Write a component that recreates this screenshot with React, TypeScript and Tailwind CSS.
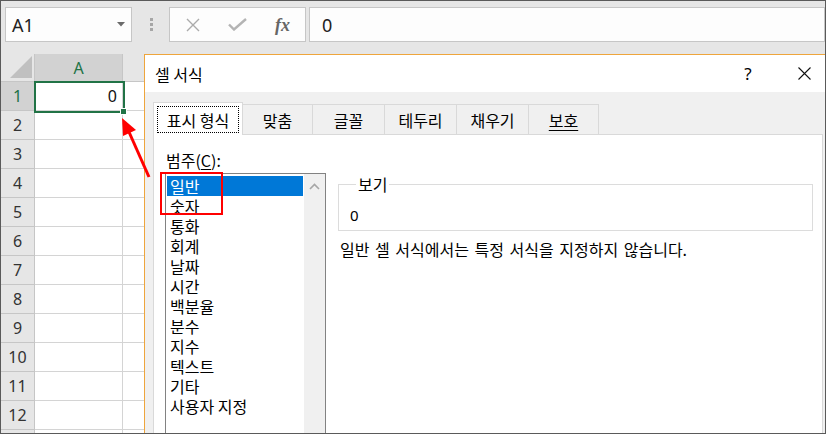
const rowNumbers = [1, 2, 3, 4, 5, 6, 7, 8, 9, 10, 11, 12, 13];

const categories = ['일반', '숫자', '통화', '회계', '날짜', '시간', '백분율', '분수', '지수', '텍스트', '기타', '사용자 지정'];

const tabs = [
  { label: '맞춤', width: 'w-[70px]', underline: false },
  { label: '글꼴', width: 'w-[72px]', underline: false },
  { label: '테두리', width: 'w-[72px]', underline: false },
  { label: '채우기', width: 'w-[72px]', underline: false },
  { label: '보호', width: 'w-[70px]', underline: true },
];

function FormulaBar() {
  return (
    <div className="h-[53px] bg-[#e6e6e6] flex items-start pt-[6px] pl-[4px]">
      {/* name box */}
      <div className="w-[127px] h-[35px] bg-[#fdfdfd] border border-[#c6c6c6] flex items-center pl-[6px] pr-[6px]">
        <span className="font-['Noto_Sans',sans-serif] text-[18px] leading-[22px] text-[#222]">A1</span>
        <svg className="ml-auto" width="8" height="5" viewBox="0 0 8 5">
          <polygon points="0,0 8,0 4,4.5" fill="#6b6b6b" />
        </svg>
      </div>

      {/* grip */}
      <div className="ml-[18px] mt-[11px] flex flex-col gap-[2px]">
        <div className="w-[3px] h-[3px] bg-[#a6a6a6]" />
        <div className="w-[3px] h-[3px] bg-[#a6a6a6]" />
        <div className="w-[3px] h-[3px] bg-[#a6a6a6]" />
      </div>

      {/* cancel / enter / fx */}
      <div className="ml-[16px] w-[137px] h-[35px] bg-[#fdfdfd] border border-[#c6c6c6] flex items-center">
        <div className="w-[45px] flex justify-center">
          <svg width="14" height="14" viewBox="0 0 14 14">
            <path d="M1 1 L13 13 M13 1 L1 13" stroke="#ababab" strokeWidth="1.4" />
          </svg>
        </div>
        <div className="w-[45px] flex justify-center">
          <svg width="19" height="13" viewBox="0 0 19 13">
            <path d="M1 6.5 L6 11.5 L18 1" stroke="#b4b4b4" strokeWidth="2.4" fill="none" />
          </svg>
        </div>
        <div className="w-[45px] flex justify-center">
          <span className="font-['Liberation_Serif',serif] italic font-bold text-[18px] leading-[22px] text-[#666]">fx</span>
        </div>
      </div>

      {/* formula input */}
      <div className="ml-[3px] flex-1 h-[35px] bg-[#fdfdfd] border border-[#c6c6c6] flex items-center pl-[12px]">
        <span className="font-['Noto_Sans',sans-serif] text-[18px] leading-[22px] text-[#222]">0</span>
      </div>
    </div>
  );
}

function SheetGrid() {
  return (
    <div className="w-[143px] overflow-hidden flex flex-col font-['Noto_Sans',sans-serif]">
      {/* column headers */}
      <div className="h-[28px] flex shrink-0">
        <div className="w-[34px] h-full bg-[#e6e6e6] border-r border-b border-[#c6c6c6] relative">
          <svg className="absolute left-[9px] top-[2px]" width="22" height="22" viewBox="0 0 22 22">
            <polygon points="0,22 22,0 22,22" fill="#c0c0c0" />
          </svg>
        </div>
        <div className="w-[88px] h-full bg-[#d2d2d2] border-r border-b border-[#c6c6c6] flex items-center justify-center text-[16px] text-[#217346]">
          A
        </div>
        <div className="w-[21px] h-full bg-[#e6e6e6] border-b border-[#c6c6c6]" />
      </div>

      {rowNumbers.map((n) => (
        <div key={n} className="h-[29px] flex shrink-0">
          <div
            className={
              n === 1
                ? 'w-[34px] h-full bg-[#d2d2d2] border-r border-b border-[#c6c6c6] flex items-center justify-center text-[16px] text-[#217346]'
                : 'w-[34px] h-full bg-[#e6e6e6] border-r border-b border-[#c6c6c6] flex items-center justify-center text-[16px] text-[#333]'
            }
          >
            {n < 13 ? n : ''}
          </div>
          <div className="w-[88px] h-full bg-white border-r border-b border-[#d4d4d4] flex items-center justify-end pr-[5px] text-[16px] text-[#111]">
            {n === 1 ? '0' : ''}
          </div>
          <div className="w-[21px] h-full bg-white border-b border-[#d4d4d4]" />
        </div>
      ))}
    </div>
  );
}

function FormatDialog() {
  return (
    <div className="flex-1 flex flex-col border-l border-t border-[#eea53c] font-['Noto_Sans_CJK_KR','Noto_Sans',sans-serif] text-[16px] text-black">
      {/* title bar */}
      <div className="h-[37px] bg-white flex items-center pl-[10px] shrink-0">
        <span className="leading-[20px]">셀 서식</span>
        <span className="ml-auto w-[30px] text-center leading-[20px] text-[17px] font-['Noto_Sans',sans-serif]">?</span>
        <div className="ml-[20px] w-[42px] flex justify-center">
          <svg width="13" height="13" viewBox="0 0 13 13">
            <path d="M0.5 0.5 L12.5 12.5 M12.5 0.5 L0.5 12.5" stroke="#111" strokeWidth="1.1" />
          </svg>
        </div>
      </div>

      {/* body */}
      <div className="flex-1 bg-[#f0f0f0] pt-[10px] pl-[8px] flex flex-col">
        {/* tabs */}
        <div className="h-[32px] flex items-end shrink-0">
          <div className="relative z-10 -mb-px w-[90px] h-[33px] bg-white border border-b-0 border-[#d9d9d9] p-[3px]">
            <div className="w-full h-[27px] border border-dotted border-black flex items-center justify-center leading-[20px]">
              표시 형식
            </div>
          </div>
          {tabs.map((t) => (
            <div
              key={t.label}
              className={`${t.width} h-[30px] border-t border-r border-[#d9d9d9] flex items-center justify-center leading-[20px]`}
            >
              <span className={t.underline ? 'underline underline-offset-[3px]' : ''}>{t.label}</span>
            </div>
          ))}
        </div>

        {/* tab page */}
        <div className="w-[670px] flex-1 bg-white border border-[#d9d9d9] pt-[15px] pl-[11px]">
          <div className="leading-[20px] pl-[1px]">
            범주(<span className="underline underline-offset-[2px]">C</span>):
          </div>

          <div className="mt-[3px] flex items-start">
            {/* category list */}
            <div className="w-[161px] h-[270px] border border-[#828282] flex">
              <div className="w-[138px] p-[1px] pt-[2px]">
                {categories.map((c, i) => (
                  <div
                    key={c}
                    className={
                      i === 0
                        ? 'h-[20px] leading-[20px] pl-[3px] bg-[#0078d7] text-white'
                        : 'h-[20px] leading-[20px] pl-[3px]'
                    }
                  >
                    {c}
                  </div>
                ))}
              </div>
              <div className="w-[21px] bg-[#f0f0f0]">
                <div className="h-[24px] flex items-center justify-center">
                  <svg width="11" height="7" viewBox="0 0 11 7">
                    <path d="M1 6 L5.5 1.5 L10 6" stroke="#a6a6a6" strokeWidth="1.6" fill="none" />
                  </svg>
                </div>
              </div>
            </div>

            {/* sample + description */}
            <div className="ml-[12px] mt-[1px] flex flex-col">
              <fieldset className="w-[475px] border border-[#dcdcdc] pl-[11px] pt-[11px] pb-[5px]">
                <legend className="ml-[6px] px-[2px] leading-[20px]">보기</legend>
                <div className="leading-[20px] text-[15px] font-['Noto_Sans',sans-serif]">0</div>
              </fieldset>
              <div className="mt-[8px] ml-[2px] leading-[20px] [word-spacing:2px]">
                일반 셀 서식에서는 특정 서식을 지정하지 않습니다.
              </div>
            </div>
          </div>
        </div>
      </div>
    </div>
  );
}

export default function App() {
  return (
    <div className="relative w-[826px] h-[434px] overflow-hidden border border-[#5a5a5a] bg-white flex flex-col">
      <FormulaBar />
      <div className="flex-1 flex overflow-hidden">
        <SheetGrid />
        <FormatDialog />
      </div>

      {/* active cell selection */}
      <div className="absolute left-[33px] top-[80px] w-[91px] h-[32px] border-2 border-[#217346] pointer-events-none" />
      <div className="absolute left-[119px] top-[107px] w-[7px] h-[7px] bg-[#217346] border border-white pointer-events-none" />

      {/* red annotation box */}
      <div className="absolute left-[159px] top-[171px] w-[63px] h-[43px] border-2 border-[#ff0000] pointer-events-none" />

      {/* red arrow */}
      <svg className="absolute left-0 top-0 pointer-events-none" width="826" height="434" viewBox="0 0 826 434">
        <line x1="148" y1="176" x2="128" y2="131" stroke="#ff0000" strokeWidth="3" />
        <polygon points="121,117 135,129 122,135" fill="#ff0000" />
      </svg>
    </div>
  );
}
